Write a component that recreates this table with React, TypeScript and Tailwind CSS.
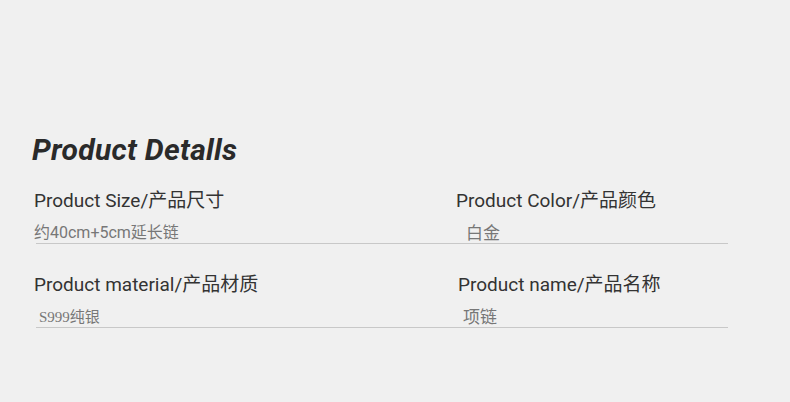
import React from "react";

const rows = [
  [
    { label: "Product Size/产品尺寸", value: "约40cm+5cm延长链", valueClass: "pl-0 text-[16px] font-['Roboto','Noto_Sans_CJK_SC',sans-serif]" },
    { label: "Product Color/产品颜色", value: "白金", valueClass: "pl-[10px] text-[17px] font-['Roboto','Noto_Sans_CJK_SC',sans-serif]" },
  ],
  [
    { label: "Product material/产品材质", value: "S999纯银", valueClass: "pl-[5px] text-[15px] font-['Liberation_Serif','Noto_Sans_CJK_SC',serif]" },
    { label: "Product name/产品名称", value: "项链", valueClass: "pl-[5px] text-[17px] font-['Roboto','Noto_Sans_CJK_SC',sans-serif]" },
  ],
];

export default function App() {
  return (
    <div className="w-[790px] h-[402px] bg-[#f0f0f0] font-['Roboto','Noto_Sans_CJK_SC',sans-serif] text-[#333]">
      <div className="pt-[132px] pl-[32px]">
        <h1 className="text-[30px] leading-[36px] font-bold italic text-[#2a2a2a] tracking-[0.3px]">
          Product Detalls
        </h1>
      </div>
      <div className="mt-[21px] pl-[34px] flex flex-col gap-[29px]">
        {rows.map((row, i) => (
          <div key={i} className="grid grid-cols-[420px_272px] border-b border-[#c8c8c8] w-[692px] ml-[2px]">
            {row.map((cell, j) => (
              <div key={j} className={j === 0 ? "-ml-[2px]" : i === 0 ? "ml-[0px]" : "ml-[2px]"}>
                <div className="text-[19px] leading-[24px] text-[#333]">{cell.label}</div>
                <div className={`mt-[10px] leading-[20px] text-[#777] ${cell.valueClass}`}>{cell.value}</div>
              </div>
            ))}
          </div>
        ))}
      </div>
    </div>
  );
}
